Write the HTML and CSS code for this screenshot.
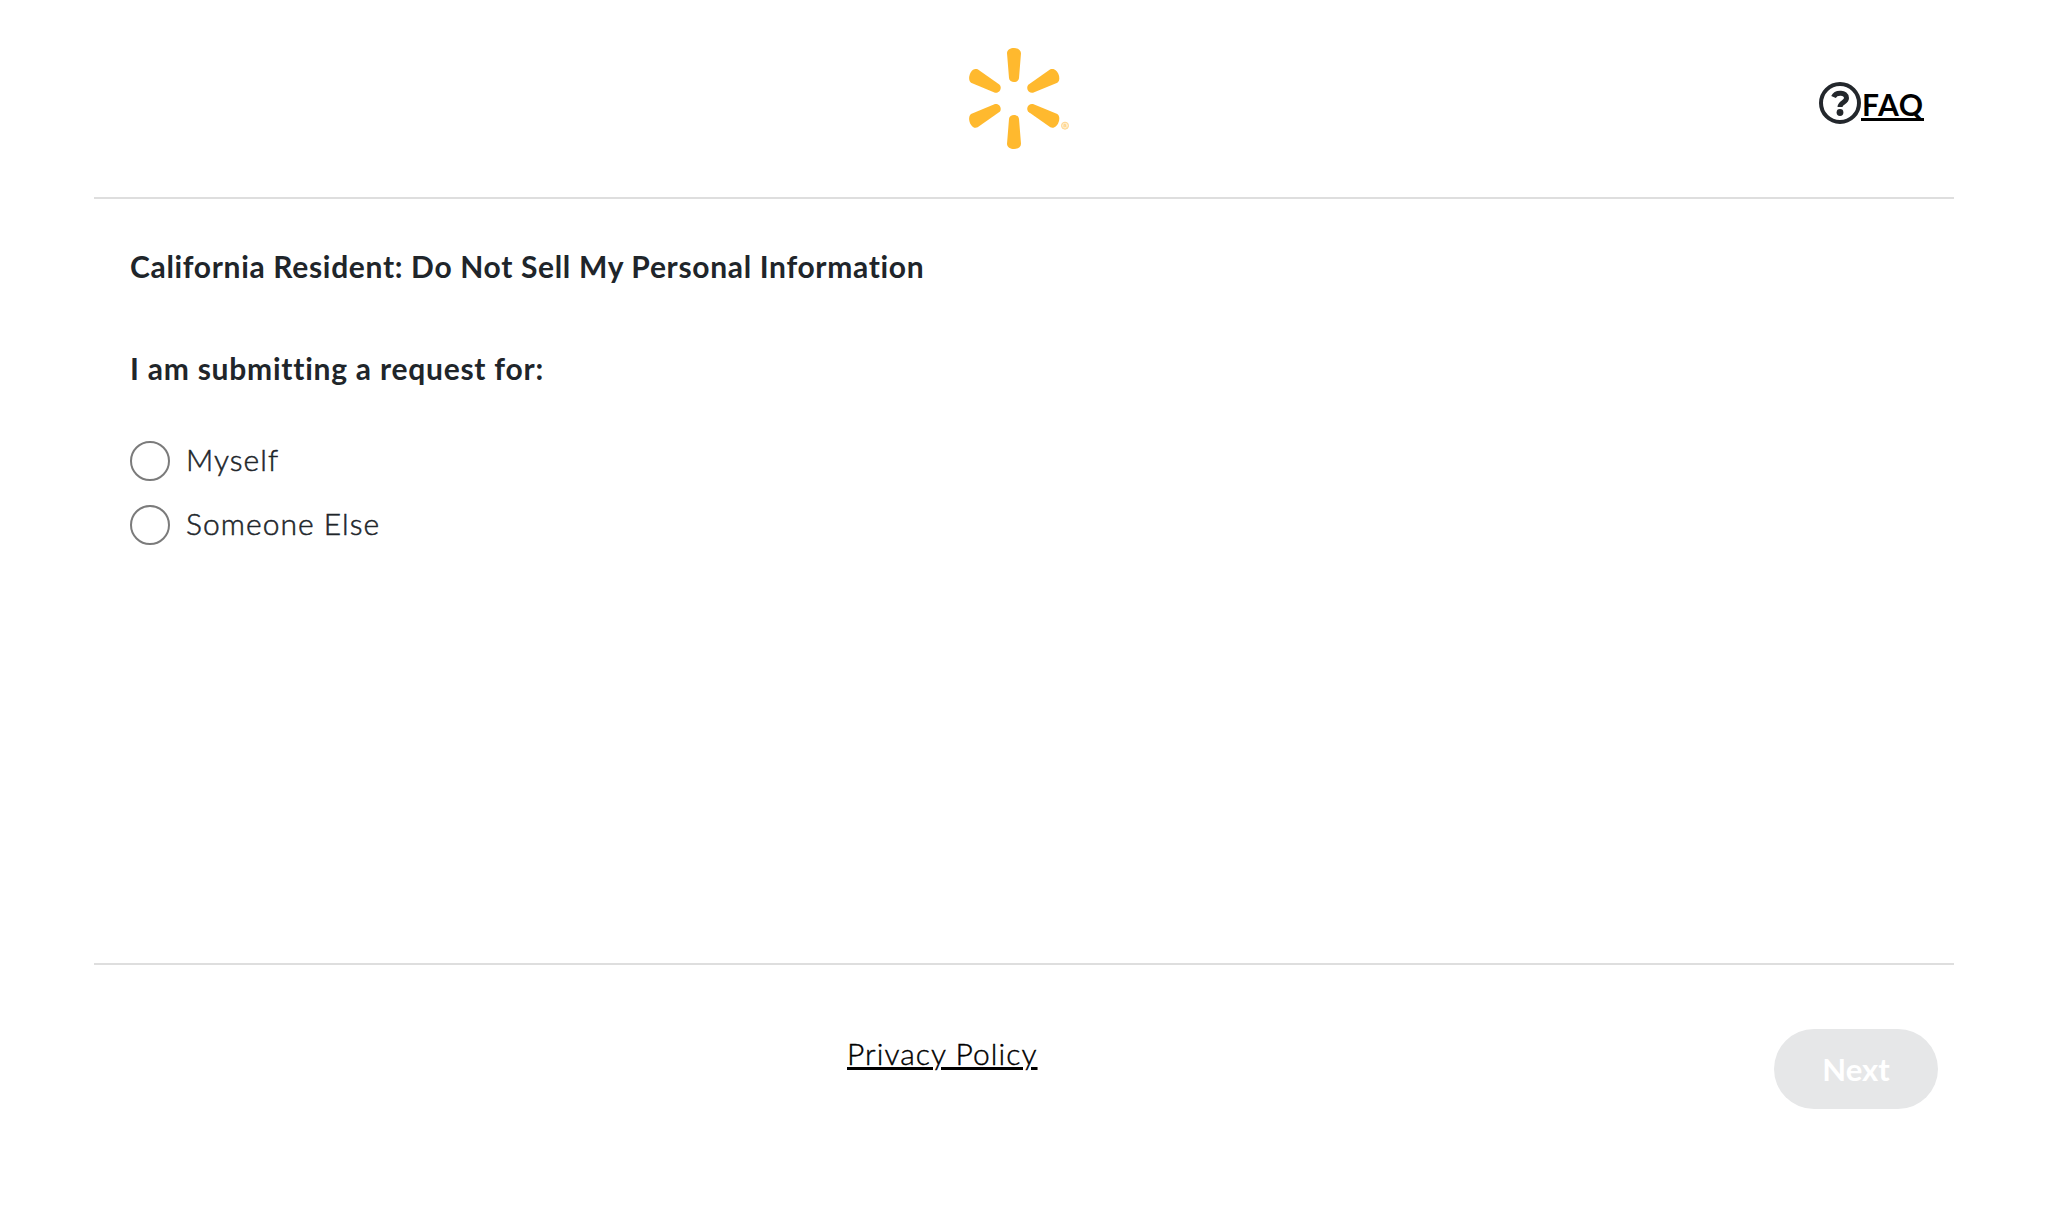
FILE: index.html
```html
<!DOCTYPE html>
<html lang="en">
<head>
<meta charset="utf-8">
<title>Do Not Sell My Personal Information</title>
<link rel="stylesheet" href="styles.css">
</head>
<body>
<div class="page">
  <header class="header">
    <svg class="logo" viewBox="57 39 300 303" aria-label="Walmart">
      <g fill="#ffb92e">
        <path d="M171 55C171 34 213 34 213 55L207 129C206 145 178 145 177 129Z"/>
        <path d="M171 326C171 347 213 347 213 326L207 252C206 236 178 236 177 252Z"/>
        <path d="M301 103C321 94 337 132 322 143L249 173C233 176 226 156 237 148Z"/>
        <path d="M301 277C321 286 337 248 322 237L249 207C233 204 226 224 237 232Z"/>
        <path d="M83 103C63 94 49 132 63 143L135 173C150 176 158 156 147 148Z"/>
        <path d="M83 277C63 286 49 248 63 237L135 207C150 204 158 224 147 232Z"/>
      </g>
      <g fill="#ffefd0" stroke="#ffd48a" stroke-width="3"><circle cx="345" cy="272" r="10.500"/><path d="M342 277V268H346Q349 270 346 273H342M346 273L349 277"/></g>
    </svg>
    <div class="faq">
      <svg class="help" viewBox="0 0 42 42"><circle cx="21" cy="21" r="19" fill="none" stroke="#23272c" stroke-width="4"/><path d="M14.500 15C17 9.500 27.500 10 27.500 16C27.500 20.500 21 20.500 21 25" fill="none" stroke="#23272c" stroke-width="5"/><circle cx="21" cy="30.500" r="3.400" fill="#23272c"/></svg>
      <a class="faq-link">FAQ</a>
    </div>
  </header>
  <main class="main">
    <h1 class="title">California Resident: Do Not Sell My Personal Information</h1>
    <h2 class="question">I am submitting a request for:</h2>
    <div class="choices">
      <label class="choice"><input class="radio" type="radio" name="who"><span>Myself</span></label>
      <label class="choice"><input class="radio" type="radio" name="who"><span>Someone Else</span></label>
    </div>
  </main>
  <footer class="footer">
    <a class="privacy">Privacy Policy</a>
    <button class="next" disabled>Next</button>
  </footer>
</div>
</body>
</html>
```
FILE: styles.css
```css
* { box-sizing: border-box; }
body { margin: 0; background: #fff; color: #20252a; font: 30px/40px Lato, "Open Sans", sans-serif; }
.page { width: 1860px; margin-left: 94px; }
.header { display: flex; height: 199px; padding: 48px 30px 0 875px; justify-content: space-between; align-items: flex-start; border-bottom: 2px solid #dedede; }
.logo { width: 100px; height: 101px; }
.faq { display: flex; margin-top: 34px; }
.help { width: 42px; height: 42px; }
.faq-link { height: 40px; width: 63px; padding-left: 1px; line-height: 47px; margin-top: -1px; border-bottom: 3px solid #000; font-weight: 700; letter-spacing: 0.7px; color: #000; }
.main { height: 766px; padding: 47px 36px 0; border-bottom: 2px solid #dedede; }
.title, .question { margin: 0; font-size: 30px; font-weight: 700; white-space: nowrap; }
.title { letter-spacing: 0.67px; }
.question { margin-top: 62px; letter-spacing: 0.76px; }
.choices { display: flex; flex-direction: column; gap: 24px; margin-top: 53px; }
.choice { display: flex; height: 40px; gap: 16px; font-weight: 300; line-height: 37px; letter-spacing: 1.05px; -webkit-text-stroke: 0.5px currentColor; }
.radio { appearance: none; width: 40px; height: 40px; margin: 0; border: 2px solid #7b7b7b; border-radius: 50%; }
.footer { display: flex; justify-content: space-between; align-items: flex-start; padding: 64px 16px 0 753px; }
.privacy { margin-top: 4px; font-weight: 300; color: #000; text-decoration: underline; text-decoration-thickness: 3px; text-underline-offset: 2px; letter-spacing: 1.05px; -webkit-text-stroke: 0.4px #000; }
.next { width: 164px; height: 80px; border: 0; border-radius: 40px; background: #e6e7e8; color: #fff; font: 700 31px/40px Lato, sans-serif; }
```
